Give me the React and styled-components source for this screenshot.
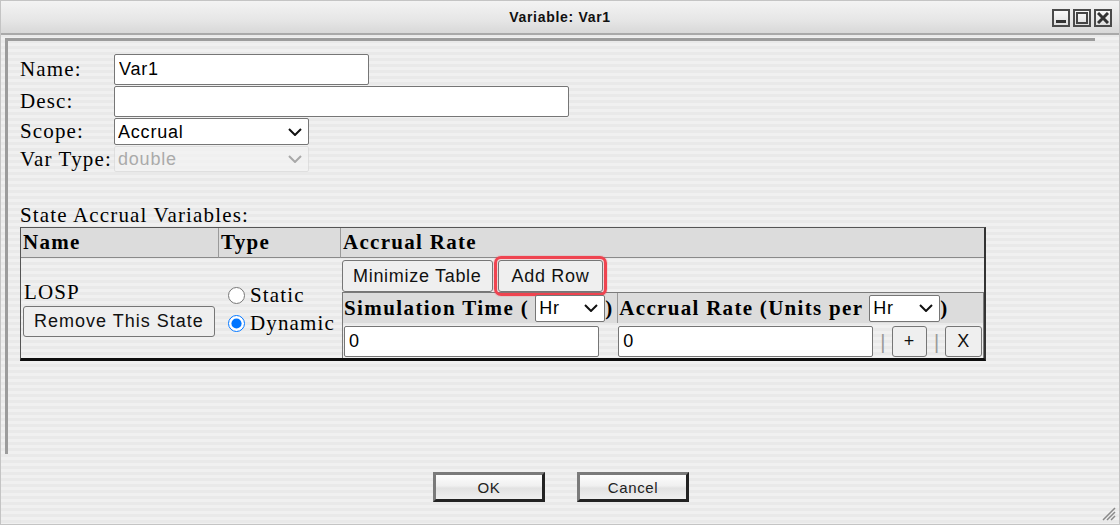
import styled, { createGlobalStyle } from "styled-components";

const GlobalStyle = createGlobalStyle`
  html, body {
    margin: 0;
    padding: 0;
    background: #f0f0f0;
  }
  body {
    font-family: "Liberation Serif", "Times New Roman", serif;
    color: #000;
  }
  * {
    box-sizing: border-box;
  }
`;

const Window = styled.div`
  position: relative;
  width: 1120px;
  height: 525px;
  border: 1px solid #c4c4c4;
  display: flex;
  flex-direction: column;
  background: repeating-linear-gradient(
    to bottom,
    #f0f0f0 0px,
    #f0f0f0 3px,
    #e9e9e9 3px,
    #e9e9e9 6px
  );
`;

const TitleBar = styled.div`
  height: 34px;
  display: grid;
  grid-template-columns: 1fr auto 1fr;
  align-items: center;
  background: linear-gradient(to bottom, #f3f3f3, #e6e6e6 60%, #d8d8d8);
  border-bottom: 2px solid #a9a9a9;
`;

const Title = styled.div`
  grid-column: 2;
  font-family: "Liberation Sans", Arial, sans-serif;
  font-weight: bold;
  font-size: 14px;
  letter-spacing: 0.7px;
  color: #111;
`;

const Controls = styled.div`
  grid-column: 3;
  justify-self: end;
  display: flex;
  gap: 3px;
  margin-right: 7px;
  margin-top: 1px;
`;

const ControlBox = styled.div`
  width: 18px;
  height: 18px;
  border: 2px solid #4a4a4a;
  background: linear-gradient(to bottom, #fafafa, #dedede);
  display: flex;
  align-items: center;
  justify-content: center;
`;

const Main = styled.div`
  padding: 3px 24px 0 4px;
`;

const ContentArea = styled.div`
  height: 416px;
  border-style: solid;
  border-width: 3px 0 0 3px;
  border-color: #9c9c9c;
  padding: 13px 12px;
`;

const FieldGrid = styled.div`
  display: grid;
  grid-template-columns: 94px auto;
  row-gap: 1px;
  align-items: center;
  justify-items: start;
`;

const Label = styled.label`
  font-size: 21px;
  letter-spacing: 1.15px;
  line-height: 23px;
  white-space: nowrap;
`;

const TextInput = styled.input`
  width: ${(p) => p.$w}px;
  height: ${(p) => p.$h || 31}px;
  font-family: "Liberation Sans", Arial, sans-serif;
  font-size: 18px;
  letter-spacing: 0.8px;
  padding: 1px 4px;
  border: 1px solid #767676;
  border-radius: 2px;
  background: #fff;
  color: #000;
`;

const SelectWrap = styled.span`
  position: relative;
  display: inline-flex;
`;

const Select = styled.select`
  appearance: none;
  width: ${(p) => p.$w}px;
  height: ${(p) => p.$h || 27}px;
  font-family: "Liberation Sans", Arial, sans-serif;
  font-size: 18px;
  font-weight: normal;
  letter-spacing: 0.8px;
  padding: 0 2px 0 3px;
  border: 1px solid #767676;
  border-radius: 2px;
  background: #fff;
  color: #000;

  &:disabled {
    color: #8f8f8f;
    border-color: #d9d9d9;
    background: #f3f3f3;
  }
`;

const Chevron = styled.svg`
  position: absolute;
  right: 7px;
  top: 50%;
  margin-top: -4px;
  pointer-events: none;
`;

const SectionLabel = styled.div`
  margin-top: 31px;
  font-size: 21px;
  letter-spacing: 1.15px;
  line-height: 24px;
  height: 24px;
`;

const StateTable = styled.table`
  width: 966px;
  border-spacing: 0;
  border-top: 1px solid #555;
  border-left: 1px solid #555;
  border-right: 2px solid #333;
  border-bottom: 3px solid #0e0e0e;
`;

const HeadCell = styled.th`
  width: ${(p) => p.$w}px;
  height: 30px;
  padding: 0 2px;
  text-align: left;
  font-size: 21px;
  letter-spacing: 1.3px;
  font-weight: bold;
  background: #dcdcdc;
  border-bottom: 1px solid #8a8a8a;
  border-left: ${(p) => (p.$first ? "none" : "1px solid #9a9a9a")};
  white-space: nowrap;
`;

const Cell = styled.td`
  padding: ${(p) => p.$pad || "0"};
  vertical-align: middle;
  font-size: 21px;
  letter-spacing: 1.15px;
`;

const StateName = styled.div`
  line-height: 24px;
  margin: 0 0 2px 1px;
`;

const Button = styled.button`
  height: ${(p) => p.$h || 32}px;
  padding: 0 ${(p) => p.$px || 10}px;
  font-family: "Liberation Sans", Arial, sans-serif;
  font-size: 18px;
  letter-spacing: ${(p) => (p.$ls != null ? p.$ls : 0.7)}px;
  color: #111;
  background: #efefef;
  border: 1px solid #767676;
  border-radius: 3px;
  white-space: nowrap;
`;

const HighlightButton = styled(Button)`
  outline: 3px solid #ef4450;
  outline-offset: 1px;
  box-shadow: 0 0 0 5px rgba(239, 68, 80, 0.12);
`;

const RadioList = styled.div`
  display: flex;
  flex-direction: column;
  gap: 3px;
  padding-top: 2px;
`;

const RadioRow = styled.label`
  display: flex;
  align-items: center;
  line-height: 25px;
`;

const Radio = styled.input`
  width: 17px;
  height: 17px;
  margin: 0 5px 0 10px;
  accent-color: #0075ff;
`;

const ButtonRow = styled.div`
  display: flex;
  gap: 5px;
  padding: 2px 0 0 2px;
`;

const RateTable = styled.table`
  width: 642px;
  margin-left: 2px;
  border-spacing: 0;
  border-top: 1px solid #7a7a7a;
  border-left: 1px solid #7a7a7a;
  border-right: 1px solid #7a7a7a;
`;

const RateHead = styled.th`
  width: ${(p) => p.$w}px;
  height: 30px;
  padding: 0 1px;
  text-align: left;
  font-size: 21px;
  letter-spacing: ${(p) => (p.$first ? 1.4 : 1.3)}px;
  font-weight: bold;
  background: #dcdcdc;
  border-left: ${(p) => (p.$first ? "none" : "1px solid #9a9a9a")};
  white-space: nowrap;
`;

const HeadInner = styled.div`
  display: flex;
  align-items: center;
  gap: 6px;
`;

const RateCell = styled.td`
  padding: 3px 1px 1px 1px;
  vertical-align: middle;
  white-space: nowrap;
`;

const RowTools = styled.div`
  display: flex;
  align-items: center;
  gap: 5px;
`;

const Divider = styled.span`
  font-family: "Liberation Sans", Arial, sans-serif;
  font-size: 20px;
  color: #9a9a9a;
  line-height: 1;
  margin-left: 2px;
`;

const Footer = styled.div`
  flex: 1;
  display: flex;
  justify-content: center;
  align-items: flex-start;
  gap: 32px;
  padding-top: 18px;
  padding-left: 2px;
`;

const DialogButton = styled.button`
  width: 112px;
  height: 30px;
  font-family: "Liberation Sans", Arial, sans-serif;
  font-size: 15px;
  letter-spacing: 0.6px;
  color: #222;
  background: linear-gradient(to bottom, #fdfdfd, #f0f0f0 45%, #e2e2e2 55%, #efefef);
  border-style: solid;
  border-width: 3px;
  border-color: #7a7a7a #222 #222 #7a7a7a;
  padding: 0;
`;

const Grip = styled.svg`
  position: absolute;
  right: 3px;
  bottom: 3px;
`;

const MinIcon = () => (
  <svg width="12" height="12" viewBox="0 0 12 12">
    <rect x="1" y="8" width="10" height="3" fill="#333" />
  </svg>
);

const MaxIcon = () => (
  <svg width="12" height="12" viewBox="0 0 12 12">
    <rect x="1" y="1" width="10" height="10" fill="none" stroke="#444" strokeWidth="2" />
  </svg>
);

const CloseIcon = () => (
  <svg width="12" height="12" viewBox="0 0 12 12">
    <path d="M1 1 L11 11 M11 1 L1 11" stroke="#333" strokeWidth="3" />
  </svg>
);

const Dropdown = ({ w, h, value, options, disabled }) => (
  <SelectWrap>
    <Select $w={w} $h={h} defaultValue={value} disabled={disabled}>
      {options.map((o) => (
        <option key={o}>{o}</option>
      ))}
    </Select>
    <Chevron width="14" height="8" viewBox="0 0 14 8">
      <path
        d="M1 1 L7 7 L13 1"
        fill="none"
        stroke={disabled ? "#a8a8a8" : "#111"}
        strokeWidth="2"
      />
    </Chevron>
  </SelectWrap>
);

const App = () => {
  return (
    <>
      <GlobalStyle />
      <Window>
        <TitleBar>
          <Title>Variable: Var1</Title>
          <Controls>
            <ControlBox>
              <MinIcon />
            </ControlBox>
            <ControlBox>
              <MaxIcon />
            </ControlBox>
            <ControlBox>
              <CloseIcon />
            </ControlBox>
          </Controls>
        </TitleBar>

        <Main>
          <ContentArea>
            <FieldGrid>
              <Label>Name:</Label>
              <TextInput $w={255} defaultValue="Var1" />
              <Label>Desc:</Label>
              <TextInput $w={455} defaultValue="" />
              <Label>Scope:</Label>
              <Dropdown w={195} value="Accrual" options={["Accrual", "Global"]} />
              <Label>Var Type:</Label>
              <Dropdown w={195} h={26} value="double" options={["double"]} disabled />
            </FieldGrid>

            <SectionLabel>State Accrual Variables:</SectionLabel>
            <StateTable>
              <thead>
                <tr>
                  <HeadCell $w={197} $first>Name</HeadCell>
                  <HeadCell $w={122}>Type</HeadCell>
                  <HeadCell>Accrual Rate</HeadCell>
                </tr>
              </thead>
              <tbody>
                <tr>
                  <Cell $pad="0 0 0 2px">
                    <StateName>LOSP</StateName>
                    <Button $h={31} $ls={1}>Remove This State</Button>
                  </Cell>
                  <Cell>
                    <RadioList>
                      <RadioRow>
                        <Radio type="radio" name="stype" />
                        Static
                      </RadioRow>
                      <RadioRow>
                        <Radio type="radio" name="stype" defaultChecked />
                        Dynamic
                      </RadioRow>
                    </RadioList>
                  </Cell>
                  <Cell>
                    <ButtonRow>
                      <Button>Minimize Table</Button>
                      <HighlightButton $px={13}>Add Row</HighlightButton>
                    </ButtonRow>
                    <RateTable>
                      <thead>
                        <tr>
                          <RateHead $w={275} $first>
                            <HeadInner>
                              Simulation Time (
                              <Dropdown w={70} value="Hr" options={["Hr", "Min"]} />
                              <span style={{ marginLeft: -6 }}>)</span>
                            </HeadInner>
                          </RateHead>
                          <RateHead>
                            <HeadInner>
                              Accrual Rate (Units per
                              <Dropdown w={71} value="Hr" options={["Hr", "Min"]} />
                              <span style={{ marginLeft: -6 }}>)</span>
                            </HeadInner>
                          </RateHead>
                        </tr>
                      </thead>
                      <tbody>
                        <tr>
                          <RateCell>
                            <TextInput $w={255} $h={31} defaultValue="0" />
                          </RateCell>
                          <RateCell>
                            <RowTools>
                              <TextInput $w={255} $h={31} defaultValue="0" />
                              <Divider>|</Divider>
                              <Button $h={31} $px={11}>+</Button>
                              <Divider>|</Divider>
                              <Button $h={31} $px={11}>X</Button>
                            </RowTools>
                          </RateCell>
                        </tr>
                      </tbody>
                    </RateTable>
                  </Cell>
                </tr>
              </tbody>
            </StateTable>
          </ContentArea>
        </Main>

        <Footer>
          <DialogButton>OK</DialogButton>
          <DialogButton>Cancel</DialogButton>
        </Footer>

        <Grip width="16" height="16" viewBox="0 0 16 16">
          <path d="M15 3 L3 15 M15 7 L7 15 M15 11 L11 15" stroke="#8a8a8a" strokeWidth="1.5" />
        </Grip>
      </Window>
    </>
  );
};

export default App;
